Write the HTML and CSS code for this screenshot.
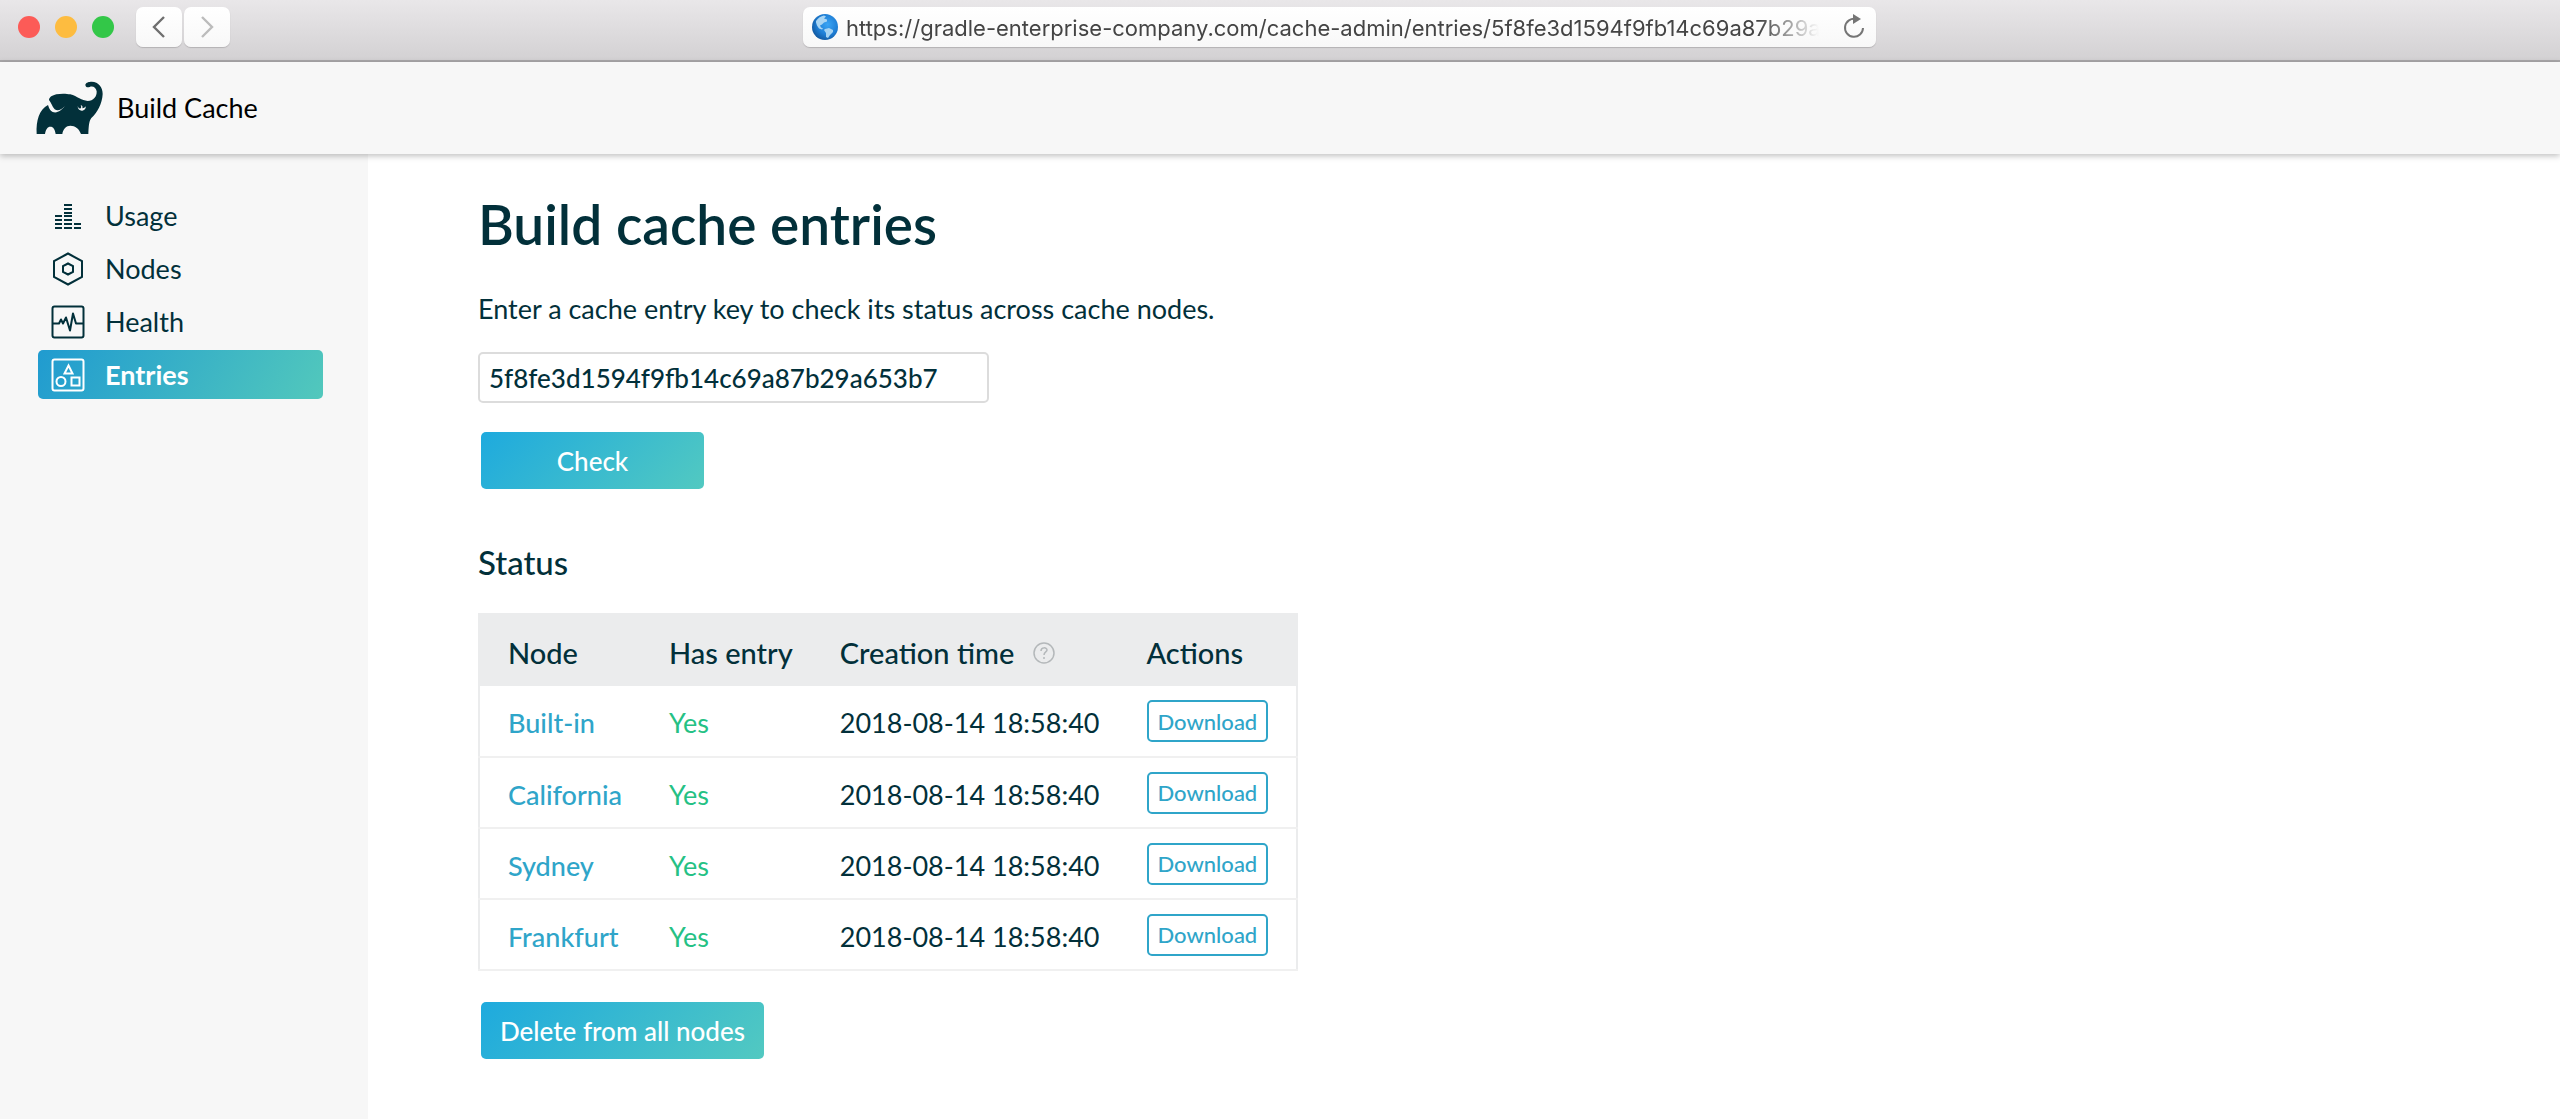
FILE: index.html
```html
<!DOCTYPE html>
<html lang="en">
<head>
    <meta charset="UTF-8">
    <meta name="viewport" content="width=device-width, initial-scale=1.0">
    <title>Build Cache - Entries</title>
    <link rel="stylesheet" href="styles.css">
</head>
<body>
    <!-- Browser toolbar -->
    <div class="browser-bar">
        <div class="window-controls">
            <span class="dot dot-close"></span>
            <span class="dot dot-minimize"></span>
            <span class="dot dot-zoom"></span>
            <div class="history-buttons">
                <button type="button" class="history-button" aria-label="Back">
                    <svg width="14" height="24" viewBox="0 0 14 24"><path d="M12 2L2 12l10 10" fill="none" stroke="#6f6f6f" stroke-width="2.4"/></svg>
                </button>
                <button type="button" class="history-button" aria-label="Forward">
                    <svg width="14" height="24" viewBox="0 0 14 24"><path d="M2 2l10 10L2 22" fill="none" stroke="#bcbcbc" stroke-width="2.4"/></svg>
                </button>
            </div>
        </div>
        <div class="address-bar">
            <svg class="globe" width="26" height="26" viewBox="0 0 26 26">
                <defs>
                    <radialGradient id="ocean" cx="60%" cy="40%" r="65%">
                        <stop offset="0" stop-color="#3aa5f5"/>
                        <stop offset="0.6" stop-color="#1f7fd6"/>
                        <stop offset="1" stop-color="#12589f"/>
                    </radialGradient>
                </defs>
                <circle cx="13" cy="13" r="13" fill="url(#ocean)"/>
                <path d="M4 7C6 4 9 2 12 1.500l2 1-2 2 3 1 0 2-3 1-2 2-2 1 1 2 2 1-1 1-3-1-2-3-1-3z" fill="#a9d5f3"/>
                <path d="M13 15l4-1 4 2 0 2-3 3-2 3-2-1 0-4-2-3z" fill="#a5d3f3"/>
            </svg>
            <input class="address-input" type="text" aria-label="Address" value="https://gradle-enterprise-company.com/cache-admin/entries/5f8fe3d1594f9fb14c69a87b29a653b7">
            <button type="button" class="reload-button" aria-label="Reload">
                <svg width="22" height="26" viewBox="0 0 22 26"><path d="M13 5A9 9 0 1 0 20 14" fill="none" stroke="#757575" stroke-width="2"/><path d="M10 0l8 5-8 5z" fill="#757575"/></svg>
            </button>
        </div>
    </div>

    <header class="app-header">
        <svg class="logo" width="67" height="54" viewBox="108 244 201 162">
            <path d="M110 403C108 362 118 330 144 316Q149 333 158 337C172 342 185 332 194 320C183 332 172 335 164 329C156 320 154 309 147 301C148 292 157 287 169 284C184 281 200 282 211 284C232 290 245 303 263 304C280 304 291 291 290 275C288 262 277 258 269 262C262 265 256 261 256 255C258 248 267 246 275 246C296 247 308 262 308 283C307 312 291 340 274 355C266 365 266 385 265 403H243C237 387 226 378 211 378C199 378 189 388 187 403H167C165 389 160 381 151 381C143 381 137 389 135 403Z" fill="#02303a"/>
            <path d="M233 320C233 329 240 334 247 333C255 331 258 326 257 320C255 324 251 326 247 326C249 322 247 317 242 317C246 323 242 329 238 326C235 325 235 322 233 320Z" fill="#f7f7f7"/>
        </svg>
        <span class="app-name">Build Cache</span>
    </header>

    <div class="layout">
        <nav class="sidebar">
            <a href="#usage" class="nav-link">
                <svg class="nav-icon" width="34" height="34" viewBox="0 0 34 34" fill="none" stroke="currentColor" stroke-width="2">
                    <path d="M4 17h7M4 21h7M4 25h7M4 29h7M13 6h8M13 10h8M13 14h8M13 17h8M13 21h8M13 25h8M13 29h8M23 25h7M23 29h7"/>
                </svg>
                Usage
            </a>
            <a href="#nodes" class="nav-link">
                <svg class="nav-icon" width="34" height="34" viewBox="0 0 34 34" fill="none" stroke="currentColor" stroke-width="2">
                    <path d="M17 1.500L31 9v16L17 32.500 3 25V9zM17 11.500l5 2.700v5.600l-5 2.700-5-2.700v-5.600z"/>
                </svg>
                Nodes
            </a>
            <a href="#health" class="nav-link">
                <svg class="nav-icon" width="34" height="34" viewBox="0 0 34 34" fill="none" stroke="currentColor" stroke-width="2">
                    <rect x="1.500" y="1.500" width="31" height="31" rx="2"/>
                    <path d="M2 18.500h6l2-4 2 4 3-6 4 13 3-17 3 10h7" stroke-linejoin="round"/>
                </svg>
                Health
            </a>
            <a href="#entries" class="nav-link active">
                <svg class="nav-icon" width="34" height="34" viewBox="0 0 34 34" fill="none" stroke="currentColor" stroke-width="2">
                    <rect x="1.500" y="1.500" width="31" height="31" rx="2"/>
                    <path d="M17.500 7.500l4 8h-8zM20.500 19.500h8v8h-8z"/>
                    <circle cx="10" cy="23.500" r="4.500"/>
                </svg>
                Entries
            </a>
        </nav>

        <main class="content">
            <h1>Build cache entries</h1>
            <form class="check-form">
                <label for="cache-key">Enter a cache entry key to check its status across cache nodes.</label>
                <input type="text" id="cache-key" class="key-input" value="5f8fe3d1594f9fb14c69a87b29a653b7">
                <button type="button" class="button check-button">Check</button>
            </form>

            <h2>Status</h2>
            <table class="status-table">
                <thead>
                    <tr>
                        <th>Node</th>
                        <th>Has entry</th>
                        <th>
                            <span class="th-help">Creation time
                                <svg width="22" height="22" viewBox="0 0 22 22" fill="none" stroke="#b4b8ba" stroke-width="1.500"><circle cx="11" cy="11" r="10"/><path d="M8 9c0-4 6-4 6-1 0 2-3 2-3 5M11 15v2"/></svg>
                            </span>
                        </th>
                        <th>Actions</th>
                    </tr>
                </thead>
                <tbody>
                    <tr>
                        <td><a href="#built-in">Built-in</a></td>
                        <td class="yes">Yes</td>
                        <td>2018-08-14 18:58:40</td>
                        <td class="actions"><button type="button" class="download-button">Download</button></td>
                    </tr>
                    <tr>
                        <td><a href="#california">California</a></td>
                        <td class="yes">Yes</td>
                        <td>2018-08-14 18:58:40</td>
                        <td class="actions"><button type="button" class="download-button">Download</button></td>
                    </tr>
                    <tr>
                        <td><a href="#sydney">Sydney</a></td>
                        <td class="yes">Yes</td>
                        <td>2018-08-14 18:58:40</td>
                        <td class="actions"><button type="button" class="download-button">Download</button></td>
                    </tr>
                    <tr>
                        <td><a href="#frankfurt">Frankfurt</a></td>
                        <td class="yes">Yes</td>
                        <td>2018-08-14 18:58:40</td>
                        <td class="actions"><button type="button" class="download-button">Download</button></td>
                    </tr>
                </tbody>
            </table>
            <button type="button" class="button delete-button">Delete from all nodes</button>
        </main>
    </div>
</body>
</html>
```

FILE: styles.css
```css
/* General Styles */
* {
    box-sizing: border-box;
}

body {
    display: flex;
    flex-direction: column;
    min-height: 100vh;
    margin: 0;
    font-family: Lato, sans-serif;
    font-size: 27px;
    line-height: 34px;
    color: #02303a;
    background-color: #fff;
}

a {
    text-decoration: none;
}

button, input {
    font-family: inherit;
    cursor: pointer;
}

svg {
    flex-shrink: 0;
}

/* Browser toolbar */
.browser-bar {
    display: grid;
    grid-template-columns: 803fr 1073fr 684fr;
    height: 62px;
    padding-top: 7px;
    background: linear-gradient(#e9e7e9, #d3d1d3);
    border-bottom: 2px solid #a9a7a9;
}

.window-controls {
    display: flex;
    align-items: center;
    gap: 15px;
    height: 40px;
    padding-left: 18px;
}

.dot {
    width: 22px;
    height: 22px;
    border-radius: 50%;
}

.dot-close {
    background-color: #fc5b57;
}

.dot-minimize {
    background-color: #fdbc40;
}

.dot-zoom {
    background-color: #33c748;
}

.history-buttons {
    display: flex;
    gap: 2px;
    margin-left: 7px;
}

.history-button {
    display: flex;
    align-items: center;
    justify-content: center;
    width: 46px;
    height: 40px;
    padding: 0;
    border: none;
    border-radius: 7px;
    background: linear-gradient(#fff, #f8f8f8);
    box-shadow: 0 1px 1px #b4b2b4;
}

.address-bar {
    display: flex;
    align-items: center;
    height: 40px;
    padding: 0 11px 0 9px;
    border-radius: 7px;
    background: linear-gradient(#fff, #f8f8f8);
    box-shadow: 0 1px 1px #b4b2b4;
}

.address-input {
    flex: 1;
    min-width: 0;
    height: 40px;
    margin: 0 24px 0 8px;
    padding: 2px 0 0;
    border: none;
    background: none;
    font-family: Inter, Roboto, sans-serif;
    font-size: 22px;
    color: #444;
    mask-image: linear-gradient(to left, transparent, #000 60px);
}

.reload-button {
    display: flex;
    padding: 0;
    border: none;
    background: none;
}

/* Header Styles */
.app-header {
    display: flex;
    align-items: center;
    gap: 14px;
    height: 92px;
    padding-left: 36px;
    background-color: #f7f7f7;
    box-shadow: 0 2px 6px rgba(0, 0, 0, 0.25);
    color: #000;
    z-index: 1;
}

/* Layout */
.layout {
    display: flex;
    flex: 1;
}

.sidebar {
    display: flex;
    flex-direction: column;
    gap: 4px;
    width: 368px;
    padding: 37px 45px 0 38px;
    background-color: #f7f7f7;
}

.nav-link {
    display: flex;
    align-items: center;
    gap: 20px;
    height: 49px;
    padding-left: 13px;
    border-radius: 5px;
    color: #02303a;
}

.nav-link.active {
    background: linear-gradient(120deg, #209bd0, #52c8bc);
    color: #fff;
    font-weight: bold;
}

.content {
    flex: 1;
    padding: 38px 0 0 110px;
}

h1 {
    margin: 0 0 36px;
    font-size: 55px;
    font-weight: 600;
    line-height: 64px;
}

h2 {
    margin: 56px 0 34px;
    font-size: 33px;
    font-weight: 500;
    line-height: 34px;
}

/* Form Styles */
.check-form {
    display: flex;
    flex-direction: column;
    align-items: flex-start;
}

.key-input {
    width: 511px;
    height: 51px;
    margin: 26px 0 29px;
    padding: 0 9px;
    border: 2px solid #dcdcdc;
    border-radius: 5px;
    font-size: 26px;
    font-weight: 500;
    color: #02303a;
}

.button {
    height: 57px;
    margin-left: 3px;
    padding: 0 19px;
    border: none;
    border-radius: 5px;
    background: linear-gradient(135deg, #1eaade, #52c9c1);
    font-size: 26px;
    font-weight: 500;
    color: #fff;
}

.check-button {
    width: 223px;
}

.delete-button {
    margin-top: 31px;
}

/* Table Styles */
.status-table {
    border-collapse: collapse;
    border: 2px solid #ebeced;
}

th, td {
    height: 71px;
    padding: 4px 25px 0 22px;
    text-align: left;
    white-space: nowrap;
}

th {
    height: 72px;
    background-color: #ebeced;
    font-size: 29px;
    font-weight: 500;
}

td {
    border-bottom: 2px solid #f0f0f0;
}

th:first-child, td:first-child {
    padding-left: 28px;
}

th:last-child, td:last-child {
    padding-right: 28px;
}

td a {
    color: #2fa5c9;
    font-weight: 500;
}

.yes {
    color: #25c184;
}

.th-help {
    display: flex;
    align-items: center;
    gap: 19px;
}

td.actions {
    padding-top: 0;
}

.download-button {
    display: block;
    height: 42px;
    padding: 0 9px;
    border: 2px solid #2fa5c9;
    border-radius: 5px;
    background-color: #fff;
    font-size: 22px;
    font-weight: 500;
    color: #2fa5c9;
}
```
